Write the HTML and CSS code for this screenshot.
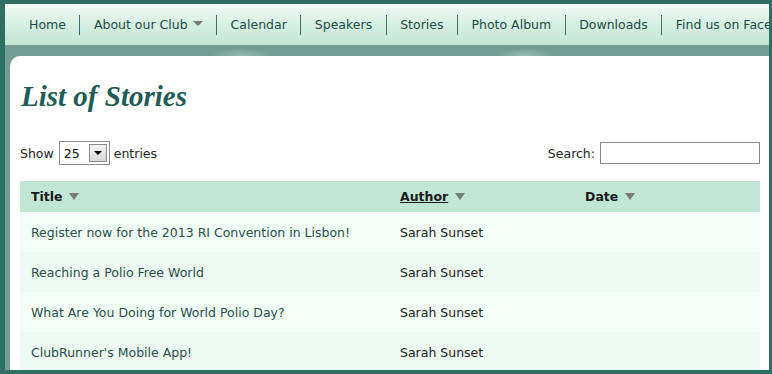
FILE: index.html
```html
<!DOCTYPE html>
<html lang="en">
<head>
    <meta charset="UTF-8">
    <title>List of Stories</title>
    <link rel="stylesheet" href="styles.css">
</head>
<body>
    <div class="frame">
        <ul class="nav">
            <li><a href="#">Home</a></li>
            <li><a href="#">About our Club</a><span class="nav-caret"></span></li>
            <li><a href="#">Calendar</a></li>
            <li><a href="#">Speakers</a></li>
            <li><a href="#">Stories</a></li>
            <li><a href="#">Photo Album</a></li>
            <li><a href="#">Downloads</a></li>
            <li><a href="#">Find us on Facebook</a></li>
        </ul>
        <div class="band"></div>
        <div class="panel">
            <h1 class="page-title">List of Stories</h1>

            <div class="table-tools">
                <div class="length">
                    Show
                    <div class="fake-select">
                        <span class="fake-select-value">25</span>
                        <span class="fake-select-btn"><span class="tri-down"></span></span>
                    </div>
                    entries
                </div>
                <label class="search">Search: <input type="text" class="search-input"></label>
            </div>

            <table class="stories">
                <thead>
                    <tr>
                        <th class="col-title">Title <span class="sort"></span></th>
                        <th class="col-author"><u>Author</u> <span class="sort"></span></th>
                        <th class="col-date">Date <span class="sort"></span></th>
                    </tr>
                </thead>
                <tbody>
                    <tr>
                        <td class="story">Register now for the 2013 RI Convention in Lisbon!</td>
                        <td>Sarah Sunset</td>
                        <td></td>
                    </tr>
                    <tr>
                        <td class="story">Reaching a Polio Free World</td>
                        <td>Sarah Sunset</td>
                        <td></td>
                    </tr>
                    <tr>
                        <td class="story">What Are You Doing for World Polio Day?</td>
                        <td>Sarah Sunset</td>
                        <td></td>
                    </tr>
                    <tr>
                        <td class="story">ClubRunner's Mobile App!</td>
                        <td>Sarah Sunset</td>
                        <td></td>
                    </tr>
                </tbody>
            </table>
        </div>
    </div>
</body>
</html>
```

FILE: styles.css
```css
* {
    margin: 0;
    padding: 0;
    box-sizing: border-box;
}

html, body {
    height: 374px;
    overflow: hidden;
}

body {
    background-color: #2e6e63;
    padding: 4px 3px 4px 5px;
    font-family: 'DejaVu Sans', Verdana, sans-serif;
    font-size: 12.5px;
    color: #222;
}

.frame {
    height: 366px;
    background-color: #739d92;
    overflow: hidden;
}

/* top menu */
.nav {
    list-style: none;
    display: flex;
    align-items: center;
    height: 41px;
    padding-left: 10.5px;
    background: linear-gradient(to bottom, #f2fbf6 0%, #d9f0e4 45%, #c1e6d4 100%);
    white-space: nowrap;
    overflow: hidden;
}

.nav li {
    display: flex;
    align-items: center;
    height: 20px;
    padding: 0 13.5px;
    border-left: 1px solid #3f6f66;
}

.nav li:first-child {
    border-left: none;
}

.nav a {
    color: #1d4b47;
    text-decoration: none;
}

.nav-caret {
    margin-left: 5px;
    margin-top: -3px;
    border-left: 5px solid transparent;
    border-right: 5px solid transparent;
    border-top: 5px solid #7a7a7a;
}

.band {
    height: 11px;
    background:
        radial-gradient(ellipse 30px 8px at 31% 100%, rgba(160, 196, 186, 0.8) 0%, rgba(115, 157, 146, 0) 100%),
        radial-gradient(ellipse 30px 8px at 68% 100%, rgba(160, 196, 186, 0.8) 0%, rgba(115, 157, 146, 0) 100%),
        #739d92;
}

/* content */
.panel {
    margin-left: 5px;
    height: 320px;
    background-color: #fff;
    border-top-left-radius: 10px;
    padding: 23px 9px 0 10px;
}

.page-title {
    font-family: 'Liberation Serif', 'Times New Roman', serif;
    font-style: italic;
    font-weight: bold;
    font-size: 29px;
    line-height: 35px;
    color: #1f5c57;
    padding-left: 1px;
}

.table-tools {
    display: flex;
    justify-content: space-between;
    align-items: center;
    margin-top: 27px;
    height: 24px;
    color: #222;
}

.length {
    display: flex;
    align-items: center;
    gap: 4px;
}

.fake-select {
    display: flex;
    align-items: center;
    justify-content: space-between;
    width: 51px;
    height: 24px;
    border: 1px solid #8a8a8a;
    padding: 0 2px 0 4px;
    margin-left: 1px;
    background: #fff;
}

.fake-select-value {
    color: #111;
}

.fake-select-btn {
    display: flex;
    align-items: center;
    justify-content: center;
    width: 18px;
    height: 18px;
    border: 1px solid #8c8c8c;
    background: linear-gradient(to bottom, #f4f4f4, #d8d8d8);
}

.tri-down {
    border-left: 4px solid transparent;
    border-right: 4px solid transparent;
    border-top: 4px solid #000;
}

.search {
    display: flex;
    align-items: center;
    gap: 5px;
}

.search-input {
    width: 160px;
    height: 22px;
    border: 1px solid #8a8a8a;
    background: #fff;
}

/* stories table */
.stories {
    width: 740px;
    margin-top: 16px;
    border-collapse: collapse;
}

.stories th {
    height: 31px;
    text-align: left;
    padding: 0 11px;
    background-color: #c0e6d4;
    color: #1a1a1a;
    font-weight: bold;
    font-size: 12.5px;
}

.stories th u {
    text-decoration: underline;
}

.col-title { width: 369px; }
.col-author { width: 185px; }

.sort {
    display: inline-block;
    margin-left: 2px;
    vertical-align: 1px;
    border-left: 5px solid transparent;
    border-right: 5px solid transparent;
    border-top: 7px solid #7a7a7a;
}

.stories td {
    height: 40px;
    padding: 0 11px;
    color: #222;
}

.stories tbody tr:nth-child(odd) td {
    background-color: #f1fdf7;
}

.stories tbody tr:nth-child(even) td {
    background-color: #edfaf3;
}

.stories td.story {
    color: #2c4d4c;
}
```
